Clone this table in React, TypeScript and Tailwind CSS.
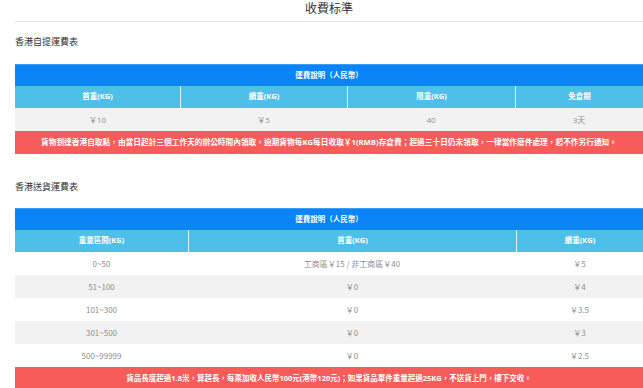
import React from "react";

const FONT = { fontFamily: '"Open Sans", "Noto Sans CJK TC", "Noto Sans CJK SC", sans-serif' };
const CJK = { fontFamily: '"Noto Sans CJK TC", "Noto Sans CJK SC", sans-serif' };

function Row({ cols, cells, className, cellClass, divider }: { cols: string; cells: string[]; className: string; cellClass?: string; divider?: boolean }) {
  return (
    <div className={`grid ${cols} ${className}`}>
      {cells.map((c, i) => (
        <div
          key={i}
          className={`flex items-center justify-center ${divider && i > 0 ? "border-l border-white/80" : ""} ${cellClass ?? ""}`}
        >
          {c}
        </div>
      ))}
    </div>
  );
}

export default function App() {
  const cols1 = "grid-cols-[165px_167px_168px_128px]";
  const cols2 = "grid-cols-[173px_328px_127px]";
  const rows2 = [
    ["0~50", "工商區￥15 / 非工商區￥40", "￥5"],
    ["51~100", "￥0", "￥4"],
    ["101~300", "￥0", "￥3.5"],
    ["301~500", "￥0", "￥3"],
    ["500~99999", "￥0", "￥2.5"],
  ];
  return (
    <div className="w-[643px] h-[388px] overflow-hidden bg-white pl-[15px]" style={FONT}>
      <div className="h-[22px] border-b border-[#e6e6e6] flex items-center justify-center text-[12px] leading-none text-[#333] pb-[3px]">
        收費标準
      </div>

      <div className="pt-[14px] h-[42px] text-[9px] leading-[11px] text-[#333]">香港自提運費表</div>

      <div className="text-[7.5px] font-bold text-white">
        <div className="h-[22px] bg-[#0b84f8] flex items-center justify-center border-t border-[#3a9dfc]">運費說明（人民幣）</div>
        <Row cols={cols1} className="h-[22px] bg-[#4ebfe8]" divider cells={["首重(KG)", "續重(KG)", "限重(KG)", "免倉期"]} />
        <Row cols={cols1} className="h-[23px] bg-[#f2f2f2] font-normal text-[#8f8f8f] text-[8px]" cells={["￥10", "￥5", "40", "3天"]} />
        <div className="h-[23px] bg-[#f65d5a] flex items-center justify-center text-[7.7px]">
          貨物到達香港自取點，由當日起計三個工作天的辦公時間內領取，逾期貨物每KG每日收取￥1(RMB)存倉費；超過三十日仍未領取，一律當作廢件處理，恕不作另行通知。
        </div>
      </div>

      <div className="pt-[27px] h-[54px] text-[9px] leading-[11px] text-[#333]">香港送貨運費表</div>

      <div className="text-[7.5px] font-bold text-white">
        <div className="h-[22px] bg-[#0b84f8] flex items-center justify-center border-t border-[#3a9dfc]">運費說明（人民幣）</div>
        <Row cols={cols2} className="h-[22px] bg-[#4ebfe8]" divider cells={["重量區間(KG)", "首重(KG)", "續重(KG)"]} />
        {rows2.map((r, i) => (
          <div key={i} style={CJK}>
            <Row
              cols={cols2}
              className={`h-[23px] font-normal text-[#8f8f8f] text-[8px] ${i % 2 === 1 ? "bg-[#f2f2f2]" : "bg-white"}`}
              cells={r}
            />
          </div>
        ))}
        <div className="h-[23px] bg-[#f65d5a] flex items-center justify-center">
          貨品長度超過1.8米，算超長，每票加收人民幣100元(港幣120元)；如果貨品單件重量超過25KG，不送貨上門，樓下交收。
        </div>
      </div>
    </div>
  );
}
